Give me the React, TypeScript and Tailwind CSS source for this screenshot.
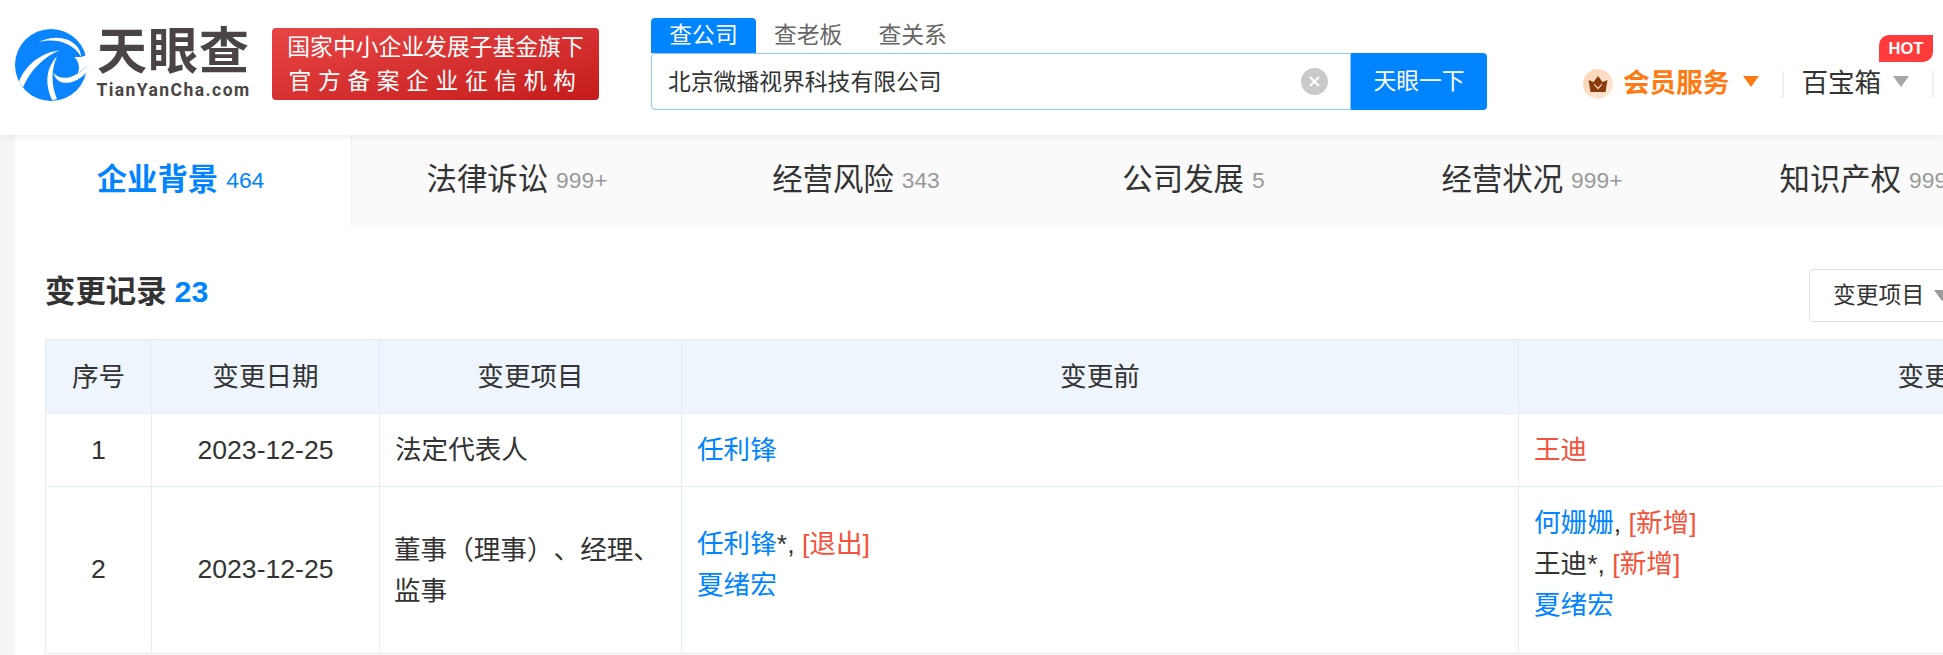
const sans = "font-['Liberation_Sans','Noto_Sans_CJK_SC',sans-serif]";

function Logo() {
  return (
    <svg width="72" height="72" viewBox="18 12 216 216" className="shrink-0">
      <circle cx="126" cy="120" r="108" fill="#0a84ff" />
      <path d="M88 52 C115 38 150 32 180 46 C202 58 216 74 216 96 C205 74 180 56 150 49 C130 45 108 46 88 52Z" fill="#fff" />
      <path d="M30 170 C48 125 90 84 152 76 C105 95 65 135 42 187Z" fill="#fff" />
      <path d="M130 226 C110 185 106 135 144 94 C126 135 126 180 144 222Z" fill="#fff" />
      <path d="M134 143 C150 165 190 168 234 124 L234 140 C195 186 140 182 134 143Z" fill="#fff" />
      <path d="M196 96 C210 110 214 130 206 146 L234 124 L234 90 L216 96Z" fill="#fff" />
    </svg>
  );
}

function Crown() {
  return (
    <div className="flex h-[30px] w-[30px] items-center justify-center rounded-full bg-gradient-to-br from-[#fbd3b4] to-[#fde9da]">
      <svg width="20" height="16" viewBox="0 0 20 16">
        <path d="M0.5 4 L5.5 6 L10 0 L14.5 6 L19.5 4 L17.5 16 L2.5 16Z" fill="#8a3c0c" />
        <path d="M6 7.5 L10 11.5 L14 7.5 L14 9 L10 13.5 L6 9Z" fill="#f9d9bf" />
      </svg>
    </div>
  );
}

function Tri({ color }: { color: string }) {
  return (
    <svg width="16" height="11" viewBox="0 0 16 11" className="shrink-0">
      <path d="M0 0 H16 L8 11Z" fill={color} />
    </svg>
  );
}

function Tab({ w, label, n, active }: { w: string; label: string; n: string; active?: boolean }) {
  return (
    <div className={`flex h-[90px] shrink-0 items-center justify-center gap-[8px] ${w} ${active ? "border-r border-[#f0f0f0] bg-white pr-[5px]" : ""}`}>
      <span className={`text-[30.4px] ${active ? "font-bold text-[#0084ff]" : "text-[#333]"}`}>{label}</span>
      <span className={`mt-[1px] text-[22.8px] ${active ? "text-[#0084ff]" : "text-[#999]"}`}>{n}</span>
    </div>
  );
}

const Blue = ({ children }: { children: React.ReactNode }) => <span className="text-[#0084ff]">{children}</span>;
const Red = ({ children }: { children: React.ReactNode }) => <span className="text-[#f4523b]">{children}</span>;

const cols = "grid grid-cols-[106px_228px_302px_837px_838px]";
const cell = "flex items-center border-r border-b border-[#e4edf6]";

export default function App() {
  return (
    <div className={`h-[655px] w-full overflow-hidden bg-[#f5f5f5] ${sans}`}>
      <header className="relative z-10 flex h-[135px] items-start bg-white shadow-[0_1px_8px_rgba(0,0,0,0.08)]">
        <div className="mt-[29px] ml-[15px]"><Logo /></div>
        <div className="mt-[23px] ml-[10px] flex w-[153px] flex-col items-center text-[#4a4444]">
          <span className="text-[50px] leading-[58px] font-bold tracking-[1px]">天眼查</span>
          <span className="font-['Roboto',sans-serif] text-[17.5px] leading-[18px] font-bold tracking-[1.45px]">TianYanCha.com</span>
        </div>
        <div className="mt-[28px] ml-[22px] flex h-[72px] w-[327px] flex-col items-center justify-center rounded-[4px] bg-gradient-to-br from-[#e84545] to-[#c51a1a] text-white">
          <span className="text-[22.8px] leading-[34px]">国家中小企业发展子基金旗下</span>
          <span className="text-[22.8px] leading-[34px] tracking-[6.6px]">官方备案企业征信机构</span>
        </div>
        <div className="mt-[18px] ml-[52px] flex w-[836px] flex-col">
          <div className="flex h-[35px] items-center">
            <div className="flex h-[35px] w-[105px] items-center justify-center rounded-t-[4px] bg-[#0084ff] text-[22.8px] text-white">查公司</div>
            <div className="ml-[18px] text-[22.8px] text-[#666]">查老板</div>
            <div className="ml-[36px] text-[22.8px] text-[#666]">查关系</div>
          </div>
          <div className="flex h-[57px]">
            <div className="flex h-[57px] w-[700px] items-center rounded-l-[4px] border border-[#8cc8ff] pr-[22px] pl-[16px] text-[22.8px] text-[#333]">
              <span className="flex-1 pt-[2px]">北京微播视界科技有限公司</span>
              <svg width="27" height="27" viewBox="0 0 27 27">
                <circle cx="13.5" cy="13.5" r="13.5" fill="#c9c9c9" />
                <path d="M9 9 L18 18 M18 9 L9 18" stroke="#fff" strokeWidth="2" />
              </svg>
            </div>
            <div className="flex h-[57px] w-[136px] items-center justify-center rounded-r-[4px] bg-[#0084ff] text-[22.8px] text-white">天眼一下</div>
          </div>
        </div>
        <div className="relative mt-[69px] ml-[96px] flex h-[30px] items-center">
          <Crown />
          <span className="ml-[10px] text-[26.6px] font-bold text-[#ff7a12]">会员服务</span>
          <div className="mb-[6px] ml-[14px]"><Tri color="#ff7a12" /></div>
          <div className="ml-[23px] h-[27px] w-[2px] bg-[#f0f0f0]" />
          <span className="ml-[17px] text-[26.6px] text-[#333]">百宝箱</span>
          <div className="mb-[6px] ml-[12px]"><Tri color="#a6a6a6" /></div>
          <div className="ml-[23px] h-[27px] w-[2px] bg-[#f0f0f0]" />
          <div className="absolute top-[-34px] left-[296px] flex h-[27px] w-[54px] items-center justify-center rounded-tl-[10px] rounded-br-[10px] bg-[#ff3b3b] text-[16.5px] font-bold text-white">HOT</div>
        </div>
      </header>

      <main className="ml-[15px] h-[520px] w-[2400px] bg-white">
        <div className="flex h-[90px] bg-[#fafafa]">
          <Tab w="w-[337px]" label="企业背景" n="464" active />
          <Tab w="w-[330px]" label="法律诉讼" n="999+" />
          <Tab w="w-[348px]" label="经营风险" n="343" />
          <Tab w="w-[327px]" label="公司发展" n="5" />
          <Tab w="w-[350px]" label="经营状况" n="999+" />
          <Tab w="w-[326px]" label="知识产权" n="999+" />
        </div>

        <div className="px-[30px]">
          <div className="flex h-[114px] items-start">
            <div className="mt-[44px] flex w-[1764px] items-center gap-[8px] text-[30.4px] font-bold">
              <span className="text-[#333]">变更记录</span>
              <span className="text-[#0084ff]">23</span>
            </div>
            <div className="mt-[44px] flex h-[53px] w-[180px] shrink-0 items-center rounded-[4px] border border-[#e0e0e0] bg-white pl-[23px] text-[22.8px] text-[#333]">
              变更项目
              <div className="ml-[10px]"><Tri color="#999" /></div>
            </div>
          </div>

          <div className="w-[2312px] border-t border-l border-[#e4edf6] text-[26.6px] leading-[41px] text-[#333]">
            <div className={`${cols} h-[74px] bg-[#eef5fc]`}>
              <div className={`${cell} justify-center pt-[2px]`}>序号</div>
              <div className={`${cell} justify-center pt-[2px]`}>变更日期</div>
              <div className={`${cell} justify-center pt-[2px]`}>变更项目</div>
              <div className={`${cell} justify-center pt-[2px]`}>变更前</div>
              <div className={`${cell} justify-center pt-[2px]`}>变更后</div>
            </div>
            <div className={`${cols} h-[73px]`}>
              <div className={`${cell} justify-center`}>1</div>
              <div className={`${cell} justify-center`}>2023-12-25</div>
              <div className={`${cell} pl-[15px]`}>法定代表人</div>
              <div className={`${cell} pl-[15px]`}><Blue>任利锋</Blue></div>
              <div className={`${cell} pl-[15px]`}><Red>王迪</Red></div>
            </div>
            <div className={`${cols} h-[167px]`}>
              <div className={`${cell} justify-center pb-[1px]`}>2</div>
              <div className={`${cell} justify-center pb-[1px]`}>2023-12-25</div>
              <div className={`${cell} px-[12px] pt-[2px] [text-spacing-trim:space-all]`}><div className="pl-[2px]">董事（理事）、经理、监事</div></div>
              <div className={`${cell} pt-[2px] pl-[15px]`}>
                <div className="mb-[12px]">
                  <div><Blue>任利锋</Blue>*, <Red>[退出]</Red></div>
                  <div><Blue>夏绪宏</Blue></div>
                </div>
              </div>
              <div className={`${cell} pt-[2px] pl-[15px]`}>
                <div className="mb-[13px]">
                  <div><Blue>何姗姗</Blue>, <Red>[新增]</Red></div>
                  <div>王迪*, <Red>[新增]</Red></div>
                  <div><Blue>夏绪宏</Blue></div>
                </div>
              </div>
            </div>
          </div>
        </div>
      </main>
    </div>
  );
}
